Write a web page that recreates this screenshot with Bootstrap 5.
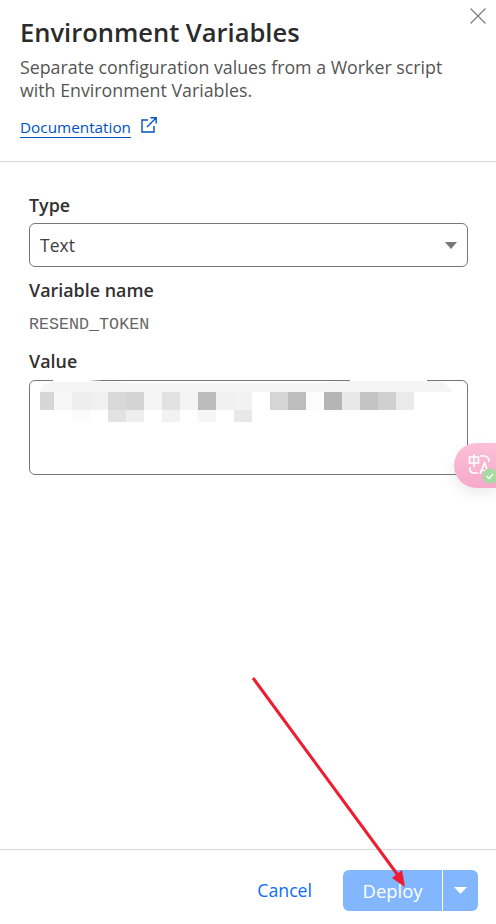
<!DOCTYPE html>
<html lang="en">
<head>
  <meta charset="UTF-8">
  <title>Environment Variables</title>
  <link href="https://cdn.jsdelivr.net/npm/bootstrap@5.3.0/dist/css/bootstrap.min.css" rel="stylesheet">
  <style>
    html, body { height: 924px; overflow: hidden; }
    body { font-family: "Open Sans", "Noto Sans", sans-serif; color: #313131; background: #fff; }
    .sheet { height: 924px; }
    .sheet-head { height: 162px; padding: 14px 20px 0; border-bottom: 1px solid #d9d9d9; }
    .sheet-title { font-size: 25.5px; line-height: 36px; font-weight: 600; color: #2b2b2b; margin: 0 0 6px; }
    .sheet-sub { font-size: 17.8px; line-height: 23px; color: #555; margin: 0 0 13px; width: 440px; }
    .doc-link { font-size: 15.3px; line-height: 21px; color: #0051c3; text-decoration: none; border-bottom: 1px solid #0051c3; }
    .ext-icon { width: 16px; height: 16px; margin-left: 6px; vertical-align: 0; }
    .close-x { top: 8px; right: 10px; width: 16px; height: 16px; }
    .sheet-body { padding: 31px 28px 0 29px; }
    .field-label { font-size: 17.9px; line-height: 24px; font-weight: 600; color: #313131; margin: 0; }
    .type-select { height: 44px; margin: 6px 0 11px; padding: 0 10px; font-family: inherit; font-size: 17.5px; color: #404040; border: 1px solid #777; border-radius: 6px;
      background-image: url("data:image/svg+xml,%3Csvg xmlns='http://www.w3.org/2000/svg' viewBox='0 0 12 7'%3E%3Cpath fill='%23777' d='M0 0h12L6 7z'/%3E%3C/svg%3E");
      background-size: 12px 7px; background-position: right 10px center; }
    .var-name { font-family: "Liberation Mono", monospace; font-size: 16.7px; line-height: 24px; color: #666; margin: 11px 0 12px; }
    .value-box { height: 95px; margin-top: 7px; border: 1px solid #777; border-radius: 6px; }
    .value-blur { top: -2px; left: -1px; width: 440px; height: 60px; }
    .sheet-foot { height: 75px; padding: 20px 18px 0 0; border-top: 1px solid #d9d9d9; }
    .cancel-link { font-size: 17.7px; line-height: 24px; color: #0a6cff; text-decoration: none; margin-right: 31px; }
    .deploy-btn, .deploy-caret { height: 41px; border: 0; background: #82b6ff; color: #fff; font-size: 18.4px; padding: 0; }
    .deploy-btn { width: 99px; border-radius: 6px 0 0 6px; }
    .deploy-caret { width: 35px; margin-left: 1px; border-radius: 0 6px 6px 0; }
    .translate-pill { top: 443px; left: 454px; width: 42px; height: 45px; border-radius: 23px 0 0 23px; background: linear-gradient(#fcc0d8, #f5a9c8); box-shadow: 0 6px 14px rgba(0,0,0,.08); }
    .arrow-mark { top: 670px; left: 245px; width: 170px; height: 225px; pointer-events: none; }
  </style>
</head>
<body>
  <div class="sheet d-flex flex-column position-relative">
    <header class="sheet-head position-relative">
      <h1 class="sheet-title">Environment Variables</h1>
      <p class="sheet-sub">Separate configuration values from a Worker script with Environment Variables.</p>
      <a href="#" class="doc-link">Documentation</a>
      <svg class="ext-icon" viewBox="0 0 16 16" fill="none" stroke="#0051c3" stroke-width="1.4"><path d="M7 3H1v12h12V9"/><path d="M6 10 15 1M9.500 .8h5.700v5.700"/></svg>
      <svg class="close-x position-absolute" viewBox="0 0 16 16" fill="none" stroke="#7d7d7d" stroke-width="1.2"><path d="M.5.5l15 15M15.500.5l-15 15"/></svg>
    </header>

    <main class="sheet-body flex-grow-1">
      <label class="field-label d-block" for="typeSel">Type</label>
      <select id="typeSel" class="form-select type-select"><option>Text</option></select>
      <div class="field-label">Variable name</div>
      <div class="var-name">RESEND_TOKEN</div>
      <div class="field-label">Value</div>
      <div class="value-box position-relative">
        <svg class="value-blur position-absolute" viewBox="0 0 440 60">
          <path fill="#fff" d="M24 0h37v4H24zM321 0h77v4h-77z"/>
          <path fill="#f5f5f5" d="M23 3h38V1l36 3h190l30-2h90q12 1 16 11H11q1-9 12-10z"/>
          <g id="blurCells"></g>
          <path fill="#fff" d="M6 12h5v20H6z"/>
        </svg>
      </div>
    </main>

    <footer class="sheet-foot d-flex justify-content-end align-items-start">
      <a href="#" class="cancel-link mt-2">Cancel</a>
      <button class="deploy-btn" type="button">Deploy</button>
      <button class="deploy-caret d-flex align-items-center justify-content-center" type="button" aria-label="More">
        <svg width="13" height="7" viewBox="0 0 13 7"><path fill="#fff" d="M0 0h13L6.500 7z"/></svg>
      </button>
    </footer>

    <div class="translate-pill position-absolute">
      <svg width="42" height="45" viewBox="0 0 42 45" fill="none" stroke="#fff" stroke-width="1.7">
        <path d="M20 11v13M15.500 14h9v6h-9zM26 13h4q5 0 5 6M16 24v2q0 4 4 4h4"/>
        <path d="M26 31l4.500-11 4.500 11M27.500 27.500h6"/>
        <circle cx="36" cy="33" r="7.500" fill="#a5dba0" stroke="none"/>
        <path d="M32.500 33l2.500 2.500 4-4.500" stroke-width="1.500"/>
      </svg>
    </div>

    <svg class="arrow-mark position-absolute" viewBox="0 0 170 225">
      <path d="M8 8 155 208" stroke="#ee1c2e" stroke-width="3" fill="none"/>
      <path d="M160 217 147 208 157 200z" fill="#ee1c2e"/>
    </svg>
  </div>

  <script>
    const rows = [
      { y: 13, h: 18, cells: ["d6d6d6","f6f6f6","eeeeee","f0f0f0","d8d8d8","d4d4d4","f5f5f5","e2e2e2","f4f4f4","bcbcbc","f0f0f0","f2f2f2",null,"d5d5d5","bdbdbd","fcfcfc","b5b5b5","e8e8e8","c4c4c4","d0d0d0","eaeaea"] },
      { y: 31, h: 12, cells: [null,null,"fcfcfc",null,"e2e2e2","eeeeee",null,"f2f2f2",null,"f6f6f6",null,"e8e8e8"] }
    ];
    const grp = document.getElementById("blurCells");
    rows.forEach(r => {
      r.cells.forEach((c, i) => {
        if (!c) return;
        const rect = document.createElementNS("http://www.w3.org/2000/svg", "rect");
        rect.setAttribute("x", 7 + i * 18);
        rect.setAttribute("y", r.y);
        rect.setAttribute("width", 18);
        rect.setAttribute("height", r.h);
        rect.setAttribute("fill", "#" + c);
        grp.appendChild(rect);
      });
    });
  </script>
  <script src="https://cdn.jsdelivr.net/npm/bootstrap@5.3.0/dist/js/bootstrap.bundle.min.js"></script>
</body>
</html>
